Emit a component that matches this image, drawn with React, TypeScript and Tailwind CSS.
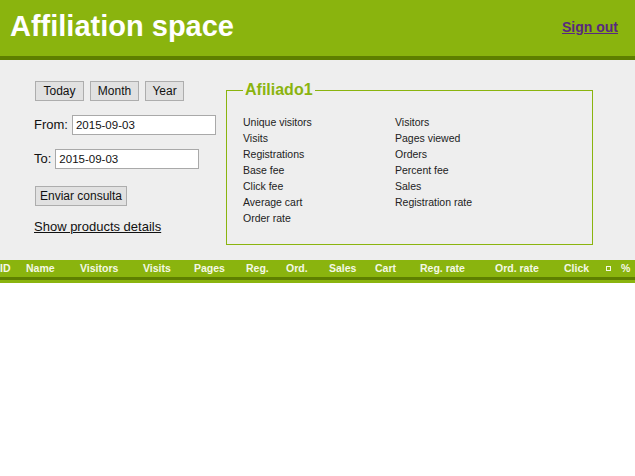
const statsLeft = [
  'Unique visitors',
  'Visits',
  'Registrations',
  'Base fee',
  'Click fee',
  'Average cart',
  'Order rate',
];

const statsRight = ['Visitors', 'Pages viewed', 'Orders', 'Percent fee', 'Sales', 'Registration rate'];

const columns: { label: string; w: string }[] = [
  { label: 'ID', w: 'w-[26px]' },
  { label: 'Name', w: 'w-[54px]' },
  { label: 'Visitors', w: 'w-[63px]' },
  { label: 'Visits', w: 'w-[51px]' },
  { label: 'Pages', w: 'w-[52px]' },
  { label: 'Reg.', w: 'w-[40px]' },
  { label: 'Ord.', w: 'w-[43px]' },
  { label: 'Sales', w: 'w-[46px]' },
  { label: 'Cart', w: 'w-[45px]' },
  { label: 'Reg. rate', w: 'w-[75px]' },
  { label: 'Ord. rate', w: 'w-[69px]' },
  { label: 'Click', w: 'w-[41px]' },
];

function Btn({ children, w }: { children: React.ReactNode; w: string }) {
  return (
    <button
      className={`${w} h-[20px] border border-[#adadad] bg-[#e1e1e1] text-[12px] leading-none text-[#111]`}
    >
      {children}
    </button>
  );
}

export default function App() {
  return (
    <div className="min-h-[476px] w-[635px] bg-white font-['Liberation_Sans',Arial,sans-serif]">
      <header className="flex h-[60px] items-start justify-between border-b-4 border-[#5e7f00] bg-[#8ab40e] pl-[10px] pr-[17px]">
        <h1 className="pt-[10px] text-[29px] font-bold leading-[32px] text-white">Affiliation space</h1>
        <a href="#" className="mt-[18px] text-[14px] font-bold leading-[18px] text-[#58297f] underline">
          Sign out
        </a>
      </header>

      <main className="flex h-[200px] items-start bg-[#eeeeee] pl-[34px] pt-[21px]">
        <div className="flex w-[192px] flex-col">
          <div className="flex gap-[6px] pl-px">
            <Btn w="w-[49px]">Today</Btn>
            <Btn w="w-[49px]">Month</Btn>
            <Btn w="w-[39px]">Year</Btn>
          </div>
          <label className="mt-[14px] flex items-center gap-[4px] text-[13px] text-[#111]">
            From:
            <input
              defaultValue="2015-09-03"
              className="h-[20px] w-[144px] border border-[#a9a9a9] bg-white px-[3px] text-[11.5px] text-[#111] outline-none"
            />
          </label>
          <label className="mt-[14px] flex items-center gap-[4px] text-[13px] text-[#111]">
            To:
            <input
              defaultValue="2015-09-03"
              className="h-[20px] w-[144px] border border-[#a9a9a9] bg-white px-[3px] text-[11.5px] text-[#111] outline-none"
            />
          </label>
          <div className="mt-[14px] pl-px">
            <Btn w="w-[92px]">Enviar consulta</Btn>
          </div>
          <a href="#" className="mt-[12px] text-[13px] leading-[16px] text-[#111] underline">
            Show products details
          </a>
        </div>

        <fieldset className="w-[367px] border border-[#8ab40e] px-[16px] pb-[18px]">
          <legend className="px-[2px] text-[16px] font-bold leading-[18px] text-[#8ab40e]">Afiliado1</legend>
          <div className="flex pt-[15px] text-[10.5px] leading-[16px] text-[#222]">
            <ul className="w-[152px]">
              {statsLeft.map((s) => (
                <li key={s}>{s}</li>
              ))}
            </ul>
            <ul>
              {statsRight.map((s) => (
                <li key={s}>{s}</li>
              ))}
            </ul>
          </div>
        </fieldset>
      </main>

      <div className="border-b-[3px] border-[#8ab40e]">
        <div className="flex h-[20px] items-center border-b-[3px] border-[#5e7f00] bg-[#8ab40e] text-[10.5px] font-bold text-[#f4f8e6]">
          {columns.map((c) => (
            <span key={c.label} className={`${c.w} shrink-0 whitespace-nowrap`}>
              {c.label}
            </span>
          ))}
          <span className="ml-[1px] inline-block h-[5px] w-[5px] shrink-0 border border-[#f4f8e6]" />
          <span className="ml-[10px] shrink-0">%</span>
        </div>
      </div>
    </div>
  );
}
